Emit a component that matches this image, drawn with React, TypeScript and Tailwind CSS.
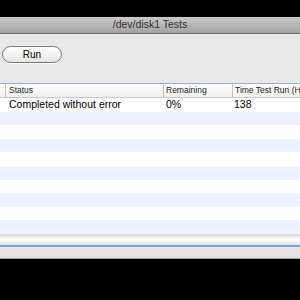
export default function App() {
  const rows = Array.from({ length: 10 }, (_, i) => i);
  return (
    <div className="flex h-[300px] w-[300px] flex-col overflow-hidden bg-black font-['Liberation_Sans',sans-serif] text-black">
      <div className="h-[17px] shrink-0 bg-black" />
      <div className="flex h-[17px] shrink-0 items-center justify-center border-b border-[#6e6e6e] bg-gradient-to-b from-[#c9c9c9] to-[#a3a3a3] text-[10.5px] text-[#303030]">
        /dev/disk1 Tests
      </div>
      <div className="flex h-[49px] shrink-0 items-start bg-[#e8e8e8] pl-[2px] pt-[12px]">
        <button className="flex h-[17px] w-[60px] items-center justify-center rounded-full border border-[#777] bg-gradient-to-b from-white to-[#e6e6e6] text-[10px] shadow-[0_1px_0_#fff]">
          Run
        </button>
      </div>
      <div className="flex shrink-0 flex-col border-t border-[#8fb0de] bg-white">
        <div className="flex h-[14px] items-center border-b border-[#c8c8c8] bg-gradient-to-b from-white to-[#f0f0f0] text-[8.5px] text-[#222]">
          <div className="h-full w-[6px] shrink-0 border-r border-[#c2c2c2]" />
          <div className="h-full w-[158px] shrink-0 border-r border-[#c2c2c2] pl-[3px] leading-[13px]">Status</div>
          <div className="h-full w-[69px] shrink-0 border-r border-[#c2c2c2] pl-[2px] leading-[13px]">Remaining</div>
          <div className="shrink-0 whitespace-nowrap pl-[2px]">Time Test Run (H</div>
        </div>
        {rows.map((i) => (
          <div
            key={i}
            className={
              i % 2 === 0
                ? "flex h-[13.6px] items-center bg-white text-[10.5px]"
                : "flex h-[13.6px] items-center bg-[#edf3fe] text-[10.5px]"
            }
          >
            {i === 0 && (
              <>
                <div className="w-[166px] shrink-0 whitespace-nowrap pl-[9px]">Completed without error</div>
                <div className="w-[68px] shrink-0">0%</div>
                <div className="shrink-0">138</div>
              </>
            )}
          </div>
        ))}
      </div>
      <div className="h-[11px] shrink-0 bg-gradient-to-b from-[#d6d6d6] via-white to-[#e4e4e4]" />
      <div className="h-[2px] shrink-0 bg-[#7aa3dc]" />
      <div className="h-[12px] shrink-0 border-b border-[#9a9a9a] bg-[#e4e4e4]" />
      <div className="flex-1 bg-black" />
    </div>
  );
}
